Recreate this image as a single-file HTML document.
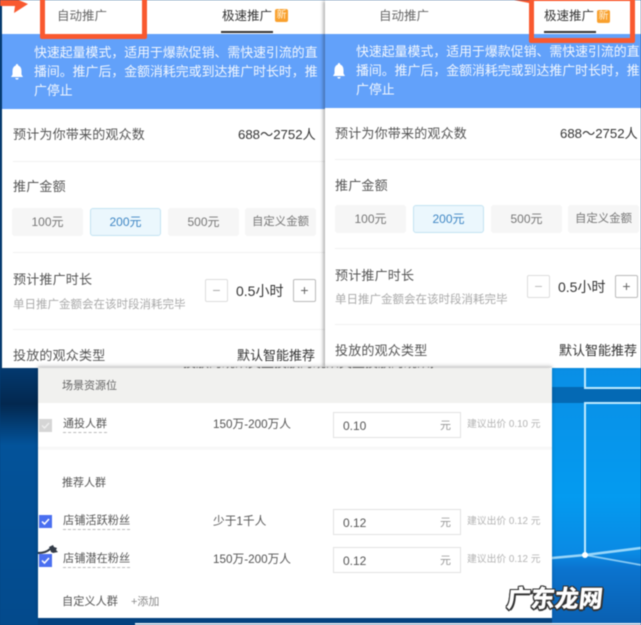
<!DOCTYPE html>
<html lang="zh">
<head>
<meta charset="utf-8">
<style>
html,body{margin:0;padding:0}
body{width:641px;height:625px;overflow:hidden;position:relative;background:#04427f;font-family:"Liberation Sans","Noto Sans CJK SC",sans-serif}
#w{position:absolute;inset:0;filter:blur(.45px)}
.a{position:absolute;white-space:nowrap;line-height:20px}
.box{position:absolute;box-sizing:border-box}
.g{color:#555;font-size:13px;letter-spacing:.2px}
.d{color:#333;font-size:13px}
.btn{position:absolute;top:0;height:28px;width:71px;background:#f6f6f6;border-radius:3px;color:#777;font-size:12px;text-align:center;line-height:28px}
.btn.c{font-size:11.4px}
.sm{color:#555;font-size:11px}
.num{color:#555;font-size:11.7px}
.inp{position:absolute;left:333px;width:128px;height:26px;box-sizing:border-box;border:1px solid #e2e2e2;background:#fff}
.inp b{position:absolute;left:9px;top:3px;font-weight:400;font-size:12px;line-height:20px;color:#555}
.inp i{position:absolute;right:9px;top:3px;font-style:normal;font-size:11px;line-height:20px;color:#999}
.tip{position:absolute;left:467px;color:#b4b4b4;font-size:9.8px;line-height:16px;white-space:nowrap}
.u{border-bottom:1px dashed #bbb;line-height:15px}
.cb{position:absolute;left:39px;width:13px;height:13px;background:#4a6ff0;color:#fff}
.nw{background:#f9a02d;border-radius:2px;color:#fff3dc;font-size:10px;line-height:13px;text-align:center}
.wm{color:#fff;font-weight:900;text-shadow:1px 0 0 #333,-1px 0 0 #333,0 1px 0 #333,0 -1px 0 #333,1px 1px 0 #333,-1px -1px 0 #333,1px -1px 0 #333,-1px 1px 0 #333,2px 1px 0 #333,0 2px 0 #333}
</style>
</head>
<body>
<div id="w">
<!-- desktop -->
<div class="box" style="left:0;top:368px;width:38px;height:257px;background:linear-gradient(180deg,#03396f 0,#03284f 14%,#03539a 30%,#034a8c 100%)"></div>
<div class="box" style="left:552px;top:368px;width:89px;height:257px;background:linear-gradient(180deg,#0a8fe6 0,#049bf0 50%,#0a8ae4 72%,#0b74cf 78%,#0a5fb0 100%)"></div>
<div class="box" style="left:552px;top:387px;width:89px;height:16px;background:#0469b4"></div>
<svg class="box" style="left:552px;top:368px" width="89" height="257"><g fill="none" stroke="#bdeaff"><path d="M33 0V20H89" stroke-width="2"/><path d="M33 187V35H89" stroke-width="2"/><path d="M0 190L33 187L89 180" stroke-width="2.500" opacity=".8"/><path d="M33 187L89 197" stroke-width="1.800" opacity=".7"/></g><circle cx="33" cy="187" r="3" fill="#fff"/></svg>
<div class="box" style="left:0;top:0;width:2px;height:368px;background:#04386c"></div>
<div class="box" style="left:135px;top:623px;width:506px;height:2px;background:#e8eef4"></div>

<!-- left panel -->
<div class="box" style="left:2px;top:0;width:323px;height:368px;background:#fff"></div>
<div class="box" style="left:2px;top:34px;width:323px;height:75px;background:#62a1fa"></div>
<div class="a" style="left:57px;top:6px;font-size:12.5px;color:#666">自动推广</div>
<div class="a" style="left:222px;top:6px;font-size:12.5px;color:#333">极速推广</div>
<div class="box nw" style="left:275px;top:9px;width:13px;height:13px">新</div>
<div class="box" style="left:221px;top:31px;width:52px;height:2px;background:#333"></div>
<div class="box" style="left:40px;top:-6px;width:107px;height:45px;border:5px solid #f9592f;border-radius:2px"></div>
<svg class="box" style="left:0;top:0" width="30" height="14"><path d="M0 0H14V-2L28 4L14 13L15 6H0Z" fill="#f9592f"/></svg>
<div class="a" style="left:34px;top:43px;font-size:12.9px;line-height:19px;color:#fff;white-space:normal;width:285px;opacity:.92">快速起量模式，适用于爆款促销、需快速引流的直播间。推广后，金额消耗完或到达推广时长时，推广停止</div>
<svg class="box" style="left:10px;top:64px" width="14" height="16"><path d="M7 0Q8.200 0 8.200 1.500Q11.500 2.700 11.500 7V10.500L13 13H1L2.500 10.500V7Q2.500 2.700 5.800 1.500Q5.800 0 7 0ZM5.300 14H8.700Q8.400 15.600 7 15.600Q5.600 15.600 5.300 14Z" fill="#fff"/></svg>
<div class="a g" style="left:13px;top:125px">预计为你带来的观众数</div>
<div class="a d" style="left:238px;top:125px;font-size:13.200px">688～2752人</div>
<div class="box" style="left:13px;top:161px;width:312px;height:1px;background:#f1f1f1"></div>
<div class="a g" style="left:13px;top:177px">推广金额</div>
<div class="box" style="left:12px;top:208px;width:310px;height:28px">
 <div class="btn" style="left:0">100元</div>
 <div class="btn" style="left:78px;background:#ebf7fd;border:1px solid #c3e3f2;box-sizing:border-box;line-height:26px;color:#3e86c4">200元</div>
 <div class="btn" style="left:156px">500元</div>
 <div class="btn c" style="left:233px">自定义金额</div>
</div>
<div class="box" style="left:13px;top:252px;width:312px;height:1px;background:#f1f1f1"></div>
<div class="a g" style="left:13px;top:270px">预计推广时长</div>
<div class="a" style="left:13px;top:295px;font-size:11.500px;color:#aaa">单日推广金额会在该时段消耗完毕</div>
<div class="box" style="left:205px;top:279px;width:23px;height:23px;border:1px solid #ddd;border-radius:2px;color:#aaa;font-size:14px;line-height:20px;text-align:center">−</div>
<div class="a d" style="left:236px;top:281px;font-size:14px">0.5小时</div>
<div class="box" style="left:293px;top:279px;width:23px;height:23px;border:1px solid #bbb;border-radius:2px;color:#666;font-size:14px;line-height:20px;text-align:center">+</div>
<div class="box" style="left:13px;top:329px;width:312px;height:1px;background:#f1f1f1"></div>
<div class="a g" style="left:13px;top:346px">投放的观众类型</div>
<div class="a d" style="left:237px;top:346px;font-size:13px">默认智能推荐</div>

<!-- right panel -->
<div class="box" style="left:325px;top:0;width:316px;height:368px;background:#fff;box-shadow:-3px 0 3px -1px rgba(0,0,0,.3)"></div>
<div class="box" style="left:325px;top:34px;width:316px;height:74px;background:#62a1fa"></div>
<div class="a" style="left:379px;top:6px;font-size:12.500px;color:#666">自动推广</div>
<div class="a" style="left:544px;top:6px;font-size:12.500px;color:#333">极速推广</div>
<div class="box nw" style="left:597px;top:10px;width:13px;height:13px">新</div>
<div class="box" style="left:544px;top:31px;width:52px;height:2px;background:#333"></div>
<div class="box" style="left:529px;top:-4px;width:106px;height:47px;border:5px solid #f9592f;border-radius:2px"></div>
<svg class="box" style="left:512px;top:0" width="17" height="4"><path d="M2 0H17V3Z" fill="#f9592f"/></svg>
<div class="a" style="left:356px;top:42px;font-size:12.900px;line-height:19px;color:#fff;white-space:normal;width:285px;opacity:.92">快速起量模式，适用于爆款促销、需快速引流的直播间。推广后，金额消耗完或到达推广时长时，推广停止</div>
<svg class="box" style="left:332px;top:63px" width="14" height="16"><path d="M7 0Q8.200 0 8.200 1.500Q11.500 2.700 11.500 7V10.500L13 13H1L2.500 10.500V7Q2.500 2.700 5.800 1.500Q5.800 0 7 0ZM5.300 14H8.700Q8.400 15.600 7 15.600Q5.600 15.600 5.300 14Z" fill="#fff"/></svg>
<div class="a g" style="left:335px;top:124px">预计为你带来的观众数</div>
<div class="a d" style="left:560px;top:124px;font-size:13.200px">688～2752人</div>
<div class="box" style="left:335px;top:159px;width:306px;height:1px;background:#f1f1f1"></div>
<div class="a g" style="left:335px;top:176px">推广金额</div>
<div class="box" style="left:335px;top:205px;width:306px;height:28px">
 <div class="btn" style="left:0">100元</div>
 <div class="btn" style="left:78px;background:#ebf7fd;border:1px solid #c3e3f2;box-sizing:border-box;line-height:26px;color:#3e86c4">200元</div>
 <div class="btn" style="left:156px">500元</div>
 <div class="btn c" style="left:233px">自定义金额</div>
</div>
<div class="box" style="left:335px;top:248px;width:306px;height:1px;background:#f1f1f1"></div>
<div class="a g" style="left:335px;top:266px">预计推广时长</div>
<div class="a" style="left:335px;top:290px;font-size:11.500px;color:#aaa">单日推广金额会在该时段消耗完毕</div>
<div class="box" style="left:527px;top:275px;width:23px;height:23px;border:1px solid #ddd;border-radius:2px;color:#bbb;font-size:14px;line-height:20px;text-align:center">−</div>
<div class="a d" style="left:558px;top:277px;font-size:14px">0.5小时</div>
<div class="box" style="left:615px;top:275px;width:23px;height:23px;border:1px solid #bbb;border-radius:2px;color:#666;font-size:14px;line-height:20px;text-align:center">+</div>
<div class="box" style="left:335px;top:324px;width:306px;height:1px;background:#f1f1f1"></div>
<div class="a g" style="left:335px;top:341px">投放的观众类型</div>
<div class="a d" style="left:559px;top:341px;font-size:13px">默认智能推荐</div>
<div class="box" style="left:325px;top:364px;width:316px;height:4px;background:#fff"></div>

<!-- bottom panel -->
<div class="box" style="left:38px;top:368px;width:514px;height:250px;background:#fff;box-shadow:0 -2px 4px rgba(0,0,0,.2)"></div>
<div class="box" style="left:38px;top:368px;width:514px;height:35px;background:#f1f1ef;border-radius:0 4px 0 0"></div>
<div class="box" style="left:38px;top:447px;width:514px;height:3px;background:linear-gradient(#f4f4f4,#fbfbfb)"></div>
<div class="box" style="left:183px;top:367px;width:250px;height:3px;overflow:hidden"><div class="a" style="left:0;top:-14px;font-size:13px;color:#222">投放的观众类型投放的观众类型投放的观众类型投放</div></div>
<div class="a sm" style="left:62px;top:376px;color:#666">场景资源位</div>
<div class="box" style="left:39px;top:419px;width:13px;height:13px;background:#d5d5d5"></div>
<svg class="box" style="left:39px;top:419px" width="13" height="13"><path d="M3 6.500L5.500 9L10 4" fill="none" stroke="#eee" stroke-width="1.500"/></svg>
<div class="a sm u" style="left:63px;top:417px">通投人群</div>
<div class="a num" style="left:213px;top:415px">150万-200万人</div>
<div class="inp" style="top:412px"><b>0.10</b><i>元</i></div>
<div class="tip" style="top:417px">建议出价 0.10 元</div>
<div class="a sm" style="left:62px;top:473px">推荐人群</div>
<div class="cb" style="top:515px"></div>
<svg class="box" style="left:39px;top:515px" width="13" height="13"><path d="M3 6.500L5.500 9L10 4" fill="none" stroke="#fff" stroke-width="1.500"/></svg>
<div class="a sm u" style="left:63px;top:514px;font-size:11.200px">店铺活跃粉丝</div>
<div class="a num" style="left:213px;top:512px">少于1千人</div>
<div class="inp" style="top:509px"><b>0.12</b><i>元</i></div>
<div class="tip" style="top:514px">建议出价 0.12 元</div>
<div class="cb" style="top:554px"></div>
<svg class="box" style="left:39px;top:554px" width="13" height="13"><path d="M3 6.500L5.500 9L10 4" fill="none" stroke="#fff" stroke-width="1.500"/></svg>
<svg class="box" style="left:36px;top:544px" width="24" height="12"><path d="M2 9Q10 9 14 5" fill="none" stroke="#333b47" stroke-width="2"/><path d="M13 3L17 1L18 3L21 4L20 6L22 8L17 9L15 8Z" fill="#333b47"/></svg>
<div class="a sm u" style="left:63px;top:552px;font-size:11.200px">店铺潜在粉丝</div>
<div class="a num" style="left:213px;top:550px">150万-200万人</div>
<div class="inp" style="top:547px"><b>0.12</b><i>元</i></div>
<div class="tip" style="top:552px">建议出价 0.12 元</div>
<div class="a sm" style="left:62px;top:592px;color:#555;font-size:11.200px">自定义人群</div>
<div class="a" style="left:131px;top:592px;font-size:11px;color:#888">+添加</div>
<div class="box" style="left:38px;top:366px;width:514px;height:3px;background:linear-gradient(#ccc,transparent);opacity:.5"></div>
<div class="a wm" style="left:507px;top:582px;font-family:'Noto Sans CJK SC',sans-serif;font-size:24px;line-height:30px;transform:skewX(-6deg)">广东龙网</div>
</div>
</body>
</html>
